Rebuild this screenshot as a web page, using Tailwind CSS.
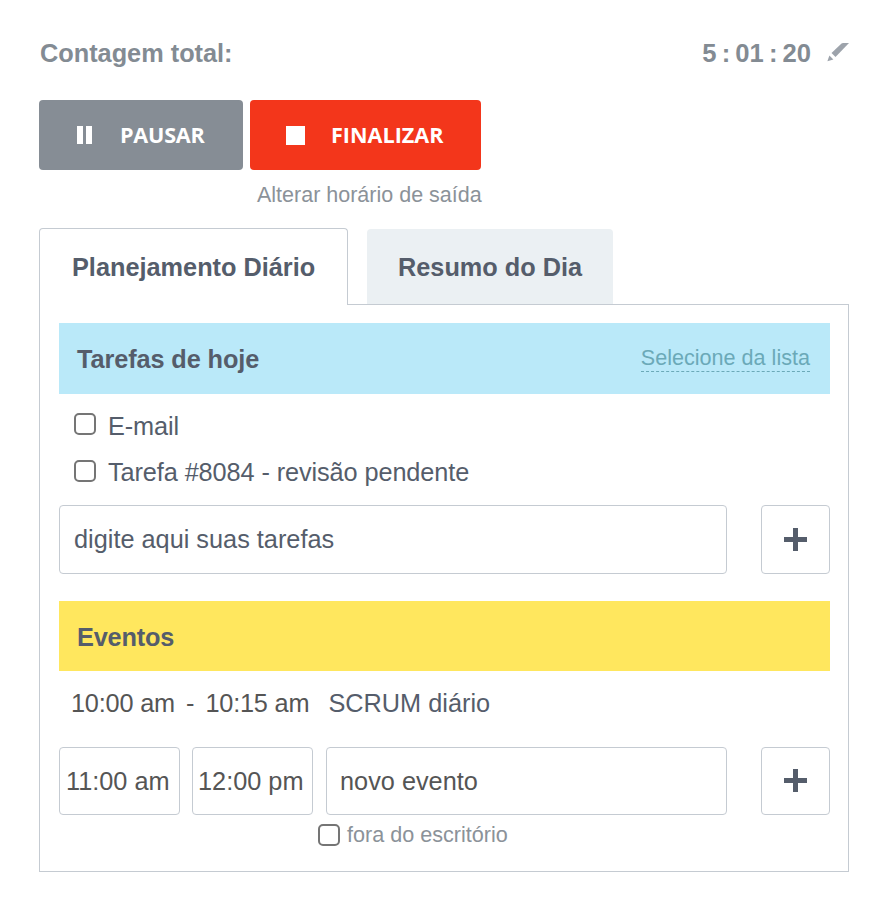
<!DOCTYPE html>
<html lang="pt-BR">
<head>
  <meta charset="UTF-8">
  <meta name="viewport" content="width=device-width, initial-scale=1.0">
  <title>Planejamento Diário</title>
  <script src="https://cdn.jsdelivr.net/npm/@tailwindcss/browser@4"></script>
</head>
<body class="bg-white font-['Liberation_Sans',Arial,sans-serif] text-[25.3px] leading-[30px] text-[#555d6b]">
  <main class="w-[849px] pl-[39px] pt-[38px]">
    <header class="flex h-[30px] items-center font-bold text-[#838b93]">
      <h1 class="pl-px">Contagem total:</h1>
      <span class="ml-auto text-[25.6px] [word-spacing:-2px]">5 : 01 : 20</span>
      <svg class="mb-1 ml-[15px] h-[22px] w-[23px]" viewBox="0 0 23 22" fill="#9da3ab">
        <path d="M17 3 L23 3 L9.5 17 L5.5 13 L15.5 3.5 Z"/>
        <path d="M3.4 15.4 L7.4 19.4 L1.4 21.2 Z"/>
      </svg>
    </header>

    <div class="mt-8 flex gap-[7px] font-['Open_Sans',sans-serif] text-[21.6px] font-bold text-white">
      <button class="flex h-[70px] w-[204px] items-center rounded bg-[#868d95] pl-[38px]">
        <svg class="h-[18px] w-[15px]" viewBox="0 0 15 18" fill="#fff">
          <path d="M0 0h6v18H0zM9 0h6v18H9z"/>
        </svg>
        <span class="ml-7 tracking-[-0.2px]">PAUSAR</span>
      </button>
      <button class="flex h-[70px] w-[231px] items-center rounded bg-[#f3361b] pl-9">
        <span class="size-[19px] bg-white"></span>
        <span class="ml-[26px]">FINALIZAR</span>
      </button>
    </div>
    <p class="mt-2.5 ml-[218px] text-[21.5px] text-[#8b9299]">Alterar horário de saída</p>

    <nav class="relative mt-[18px] flex items-end font-bold">
      <a class="-mb-px h-[77px] w-[309px] rounded-t border border-b-0 border-[#c5cbd2] bg-white pt-[23px] pl-8">Planejamento Diário</a>
      <a class="ml-[19px] h-[75px] w-[246px] rounded-t bg-[#ebf0f3] pt-[23px] pl-[31px]">Resumo do Dia</a>
    </nav>

    <section class="h-[568px] border border-[#c5cbd2] pt-[18px] pr-[18px] pl-[19px]">
      <div class="flex h-[71px] items-center justify-between bg-[#bae9f9] pr-5 pl-[18px]">
        <h2 class="font-bold tracking-[-0.1px]">Tarefas de hoje</h2>
        <a class="mb-0.5 border-b border-dashed border-[#6ba9b8] text-[21.6px] leading-[27px] text-[#6ba9b8]">Selecione da lista</a>
      </div>

      <ul class="mt-[17px] pl-[15px] tracking-[-0.1px]">
        <li class="flex h-[47px]">
          <input type="checkbox" class="mt-0.5 size-[22px] appearance-none rounded-[5px] border-2 border-[#757575]">
          <span class="ml-3">E-mail</span>
        </li>
        <li class="flex h-[47px]">
          <input type="checkbox" class="mt-0.5 size-[22px] appearance-none rounded-[5px] border-2 border-[#757575]">
          <span class="-mt-px ml-3">Tarefa #8084 - revisão pendente</span>
        </li>
      </ul>

      <div class="flex justify-between">
        <div class="flex h-[69px] w-[668px] items-center rounded border border-[#c5cbd2] pb-px pl-3.5">digite aqui suas tarefas</div>
        <button class="flex h-[69px] w-[69px] items-center justify-center rounded border border-[#c5cbd2]">
          <svg class="size-[23px]" viewBox="0 0 23 23" fill="#555d6b"><path d="M9 0h5v9h9v5h-9v9H9v-9H0V9h9z"/></svg>
        </button>
      </div>

      <div class="mt-[27px] flex h-[70px] items-center bg-[#ffe75e] pt-0.5 pl-[18px]">
        <h2 class="font-bold tracking-[-0.2px]">Eventos</h2>
      </div>

      <div class="mt-[17px] flex pl-3 text-[#555]">
        <span class="w-[104px] tracking-[-0.2px] whitespace-nowrap">10:00 am</span>
        <span class="ml-[11px]">-</span>
        <span class="ml-[11px] w-[105px] tracking-[-0.2px] whitespace-nowrap">10:15 am</span>
        <span class="ml-[18px] text-[#555d6b]">SCRUM diário</span>
      </div>

      <div class="mt-[29px] flex text-[#555]">
        <div class="flex h-[68px] w-[121px] items-center rounded border border-[#c5cbd2] pl-1.5 whitespace-nowrap">11:00 am</div>
        <div class="ml-3 flex h-[68px] w-[121px] items-center rounded border border-[#c5cbd2] pl-[5px] whitespace-nowrap">12:00 pm</div>
        <div class="ml-[13px] flex h-[68px] w-[401px] items-center rounded border border-[#c5cbd2] pl-[13px]">novo evento</div>
        <button class="ml-auto flex h-[68px] w-[69px] items-center justify-center rounded border border-[#c5cbd2] pb-px">
          <svg class="size-[23px]" viewBox="0 0 23 23" fill="#555d6b"><path d="M9 0h5v9h9v5h-9v9H9v-9H0V9h9z"/></svg>
        </button>
      </div>

      <label class="mt-[5px] ml-[259px] flex items-center text-[21.6px] text-[#8b9299]">
        <input type="checkbox" class="size-[22px] appearance-none rounded-[5px] border-2 border-[#757575]">
        <span class="ml-[7px]">fora do escritório</span>
      </label>
    </section>
  </main>
</body>
</html>
